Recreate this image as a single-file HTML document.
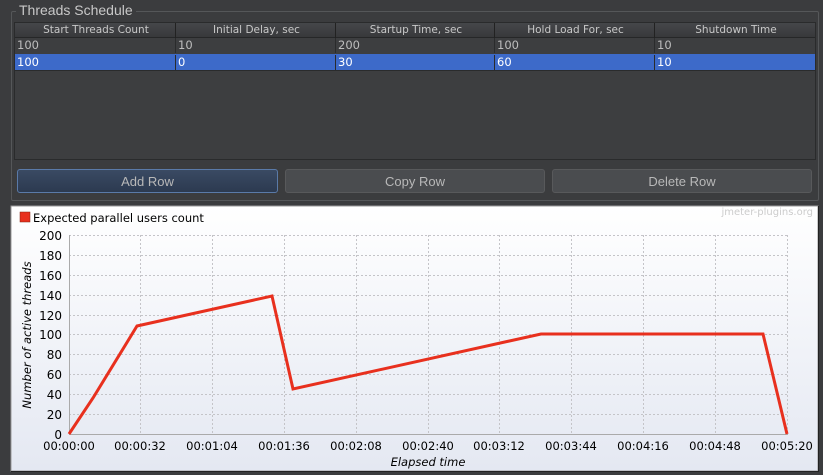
<!DOCTYPE html>
<html><head><style>
body{margin:0;width:823px;height:475px;background:#3b3c3e;font-family:"Liberation Sans",sans-serif;position:relative;overflow:hidden}
.abs{position:absolute}
.grp{left:11px;top:11px;width:806px;height:188px;border:1px solid #555759;border-radius:2px}
.title{left:16px;top:2px;background:#3b3c3e;padding:0 3px;color:#c8c8c8;font-size:14px}
.tbl{left:14px;top:22px;width:800px;height:136px;border:1px solid #2a2b2c;background:#3d3e40}
.hdr{left:0;top:0;width:800px;height:14px;background:linear-gradient(#45474a,#38393b);border-bottom:1px solid #262728;}
.cell{position:absolute;font-family:"DejaVu Sans",sans-serif;font-size:11.5px;height:15px;line-height:15px;white-space:nowrap;box-sizing:border-box;padding-left:2px}
.btn{top:169px;height:24px;border-radius:3px;background:#4a4c4f;border:1px solid #58595b;color:#b8b8b8;font-size:13px;text-align:center;line-height:24px;box-sizing:border-box}
svg text{font-family:"DejaVu Sans",sans-serif}
</style></head><body>
<div class="abs grp"></div>
<div class="abs title">Threads Schedule</div>
<div class="abs tbl">
 <div class="abs hdr"></div>
 <div class="cell" style="left:0;top:0;width:160px;text-align:center;color:#c8c8c8;font-size:10.5px;line-height:14px">Start Threads Count</div>
 <div class="cell" style="left:160px;top:0;width:160px;text-align:center;color:#c8c8c8;font-size:10.5px;line-height:14px;border-left:1px solid #222">Initial Delay, sec</div>
 <div class="cell" style="left:320px;top:0;width:159px;text-align:center;color:#c8c8c8;font-size:10.5px;line-height:14px;border-left:1px solid #222">Startup Time, sec</div>
 <div class="cell" style="left:479px;top:0;width:160px;text-align:center;color:#c8c8c8;font-size:10.5px;line-height:14px;border-left:1px solid #222">Hold Load For, sec</div>
 <div class="cell" style="left:639px;top:0;width:161px;text-align:center;color:#c8c8c8;font-size:10.5px;line-height:14px;border-left:1px solid #222">Shutdown Time</div>
 <div class="abs" style="left:0;top:15px;width:800px;height:16px;border-bottom:1px solid #2a2b2c"></div>
 <div class="cell" style="left:0;top:15px;width:160px;color:#bdbdbd">100</div>
 <div class="cell" style="left:160px;top:15px;width:160px;color:#bdbdbd;border-left:1px solid #2a2b2c">10</div>
 <div class="cell" style="left:320px;top:15px;width:159px;color:#bdbdbd;border-left:1px solid #2a2b2c">200</div>
 <div class="cell" style="left:479px;top:15px;width:160px;color:#bdbdbd;border-left:1px solid #2a2b2c">100</div>
 <div class="cell" style="left:639px;top:15px;width:161px;color:#bdbdbd;border-left:1px solid #2a2b2c">10</div>
 <div class="abs" style="left:0;top:31px;width:800px;height:16px;background:#3d6ac9;border-bottom:1px solid #2a2b2c"></div>
 <div class="cell" style="left:0;top:32px;width:160px;color:#fff">100</div>
 <div class="cell" style="left:160px;top:32px;width:160px;color:#fff;border-left:1px solid #2a2b2c">0</div>
 <div class="cell" style="left:320px;top:32px;width:159px;color:#fff;border-left:1px solid #2a2b2c">30</div>
 <div class="cell" style="left:479px;top:32px;width:160px;color:#fff;border-left:1px solid #2a2b2c">60</div>
 <div class="cell" style="left:639px;top:32px;width:161px;color:#fff;border-left:1px solid #2a2b2c">10</div>
</div>
<div class="abs btn" style="left:17px;width:261px;background:linear-gradient(#3a4a63,#2c3a50);border-color:#5a7aa8">Add Row</div>
<div class="abs btn" style="left:285px;width:260px">Copy Row</div>
<div class="abs btn" style="left:552px;width:260px">Delete Row</div>
<svg class="abs" style="left:10px;top:205px" width="810" height="268" viewBox="10 205 810 268">
<defs><linearGradient id="g" x1="0" y1="0" x2="0" y2="1"><stop offset="0" stop-color="#ffffff"/><stop offset="1" stop-color="#e4e8f2"/></linearGradient></defs>
<rect x="11" y="206" width="807" height="265" fill="url(#g)" stroke="#999" stroke-width="1"/>
<line x1="818.5" y1="206" x2="818.5" y2="472" stroke="#222"/><line x1="11" y1="471.5" x2="819" y2="471.5" stroke="#222"/>
<text x="813" y="215" text-anchor="end" font-size="10" fill="#ccc">jmeter-plugins.org</text>
<rect x="20" y="212" width="10" height="10" fill="#e8301e" stroke="#802010" stroke-width="0.5"/>
<text x="33" y="222" font-size="11.5" fill="#000">Expected parallel users count</text>
<g stroke="#c4c4c8" stroke-dasharray="2,2" stroke-width="1">
<line x1="69" y1="235.5" x2="787" y2="235.5"/><line x1="69" y1="255.5" x2="787" y2="255.5"/><line x1="69" y1="275.5" x2="787" y2="275.5"/><line x1="69" y1="295.5" x2="787" y2="295.5"/><line x1="69" y1="315.5" x2="787" y2="315.5"/><line x1="69" y1="334.5" x2="787" y2="334.5"/><line x1="69" y1="354.5" x2="787" y2="354.5"/><line x1="69" y1="374.5" x2="787" y2="374.5"/><line x1="69" y1="394.5" x2="787" y2="394.5"/><line x1="69" y1="414.5" x2="787" y2="414.5"/>
<line x1="140.5" y1="235" x2="140.5" y2="434"/><line x1="212.5" y1="235" x2="212.5" y2="434"/><line x1="284.5" y1="235" x2="284.5" y2="434"/><line x1="356.5" y1="235" x2="356.5" y2="434"/><line x1="428.5" y1="235" x2="428.5" y2="434"/><line x1="499.5" y1="235" x2="499.5" y2="434"/><line x1="571.5" y1="235" x2="571.5" y2="434"/><line x1="643.5" y1="235" x2="643.5" y2="434"/><line x1="715.5" y1="235" x2="715.5" y2="434"/><line x1="787.5" y1="235" x2="787.5" y2="434"/>
</g>
<line x1="69.5" y1="235" x2="69.5" y2="434" stroke="#aaa"/><line x1="69" y1="434.5" x2="788" y2="434.5" stroke="#aaa"/>
<g font-size="12" fill="#000" text-anchor="end">
<text x="62" y="240">200</text><text x="62" y="260">180</text><text x="62" y="280">160</text><text x="62" y="300">140</text><text x="62" y="320">120</text><text x="62" y="339">100</text><text x="62" y="359">80</text><text x="62" y="379">60</text><text x="62" y="399">40</text><text x="62" y="419">20</text><text x="62" y="439">0</text>
</g>
<g font-size="11.5" fill="#000" text-anchor="middle">
<text x="69" y="450">00:00:00</text><text x="140" y="450">00:00:32</text><text x="212" y="450">00:01:04</text><text x="284" y="450">00:01:36</text><text x="356" y="450">00:02:08</text><text x="428" y="450">00:02:40</text><text x="499" y="450">00:03:12</text><text x="571" y="450">00:03:44</text><text x="643" y="450">00:04:16</text><text x="715" y="450">00:04:48</text><text x="787" y="450">00:05:20</text>
</g>
<text x="428" y="466" font-size="11.5" font-style="italic" text-anchor="middle">Elapsed time</text>
<text transform="translate(31,335) rotate(-90)" font-size="11.5" font-style="italic" text-anchor="middle">Number of active threads</text>
<polyline points="69,434 93,398 137,326 272,296 293,389 541,334 763,334 787,434" fill="none" stroke="#e8301e" stroke-width="3" stroke-linejoin="miter"/>
</svg>
</body></html>
